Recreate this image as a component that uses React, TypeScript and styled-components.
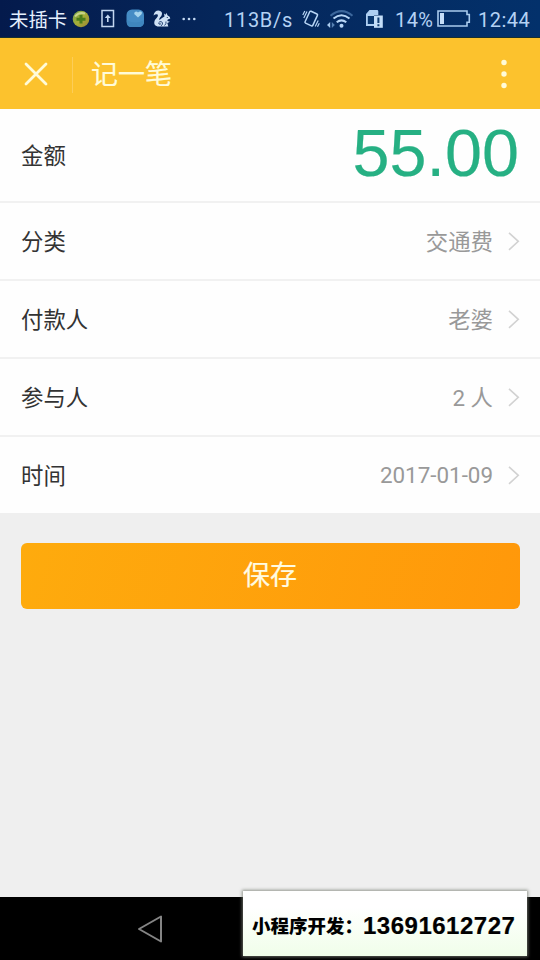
import React from 'react';
import styled, { createGlobalStyle } from 'styled-components';

const Global = createGlobalStyle`
  * { box-sizing: border-box; }
  body { margin: 0; background: #efefef; }
`;

const Screen = styled.div`
  position: relative;
  display: flex;
  flex-direction: column;
  width: 540px;
  height: 960px;
  overflow: hidden;
  background: #efefef;
  font-family: Roboto, 'Noto Sans CJK SC', sans-serif;
`;

const StatusBar = styled.header`
  display: flex;
  align-items: center;
  height: 38px;
  flex: none;
  padding: 0 0 0 9px;
  background: linear-gradient(90deg, #041a4c 0%, #05265a 40%, #03316b 100%);
  border-bottom: 1px solid #18302f;
  color: #b4d2f4;
`;

const Carrier = styled.span`
  flex: none;
  width: 58px;
  padding-top: 5px;
  font-size: 19.4px;
  line-height: 34px;
  color: #e4f0ff;
  white-space: nowrap;
`;

const Reading = styled.span<{ $width: number; $gap?: number; $spacing?: number }>`
  flex: none;
  width: ${(p) => p.$width}px;
  margin-left: ${(p) => p.$gap ?? 0}px;
  letter-spacing: ${(p) => p.$spacing ?? 0}px;
  font-size: 20px;
  line-height: 34px;
  padding-top: 3px;
  white-space: nowrap;
`;

const Glyph = styled.svg<{ $gap?: number }>`
  display: block;
  flex: none;
  margin-left: ${(p) => p.$gap ?? 0}px;
`;

const TitleBar = styled.div`
  display: flex;
  align-items: center;
  flex: none;
  height: 71px;
  padding: 0 20px 0 24px;
  background: #fcc22d;
`;

const TitleDivider = styled.span`
  width: 1px;
  height: 36px;
  margin: 2px 18px 0 24px;
  background: #fdcd58;
`;

const Title = styled.h1`
  flex: 1;
  margin: 0;
  padding-top: 3px;
  font-size: 27px;
  font-weight: 400;
  line-height: 40px;
  color: #fffbd8;
  -webkit-text-stroke: 0.2px;
`;

const Form = styled.div`
  flex: none;
  background: #fefefe;
`;

const Row = styled.div<{ $height?: number }>`
  display: flex;
  align-items: center;
  height: ${(p) => p.$height ?? 78}px;
  padding: 0 20px 0 21px;
  border-bottom: 2px solid #f1f1f1;
  &:last-child { border-bottom-color: #efefef; }
`;

const Label = styled.span`
  flex: 1;
  padding-top: 2px;
  font-size: 22.4px;
  line-height: 34px;
  color: #333;
`;

const Value = styled.span<{ $latin?: boolean }>`
  margin-right: 15px;
  padding-top: ${(p) => (p.$latin ? 0 : 2)}px;
  font-size: 22.4px;
  line-height: 34px;
  color: #999;
`;

const Amount = styled.span`
  margin: -5px 1px 0 0;
  font-family: 'Liberation Sans', Arial, sans-serif;
  font-size: 66.5px;
  line-height: 78px;
  color: #26b083;
  -webkit-text-stroke: 0.2px #26b083;
`;

const SaveButton = styled.button`
  flex: none;
  height: 66px;
  margin: 28px 20px 0 21px;
  padding: 0 1px 5px 0;
  border: 0;
  border-radius: 6px;
  background: linear-gradient(105deg, #feab0d, #ff980a);
  font-family: inherit;
  font-size: 27px;
  color: #fffbe2;
  -webkit-text-stroke: 0.2px;
`;

const NavBar = styled.footer`
  display: flex;
  align-items: center;
  flex: none;
  height: 63px;
  margin-top: auto;
  padding-left: 137px;
  background: #000;
`;

const Contact = styled.aside`
  position: absolute;
  left: 243px;
  top: 891px;
  display: flex;
  align-items: center;
  width: 284px;
  height: 65px;
  padding: 4px 0 0 9px;
  background: linear-gradient(#fff 25%, #f0fee9);
  box-shadow: 0 0 3px 1px rgba(120, 125, 115, 0.8);
  color: #000;
  white-space: nowrap;
`;

const ContactLabel = styled.span`
  width: 111px;
  padding-top: 2px;
  font-size: 18.5px;
  font-weight: 900;
  line-height: 30px;
`;

const Phone = styled.strong`
  font-family: 'Liberation Sans', Arial, sans-serif;
  font-size: 24px;
  line-height: 30px;
  letter-spacing: 0.5px;
  -webkit-text-stroke: 0.2px;
`;

const fields = [
  { label: '分类', value: '交通费' },
  { label: '付款人', value: '老婆' },
  { label: '参与人', value: '2 人' },
  { label: '时间', value: '2017-01-09', latin: true },
];

const Chevron = () => (
  <Glyph width="12" height="20" viewBox="0 0 12 20" fill="none" stroke="#d2d2d2" strokeWidth="1.6">
    <path d="M1 1.800 10.300 10.300 1 18.800" />
  </Glyph>
);

const CoinIcon = () => (
  <Glyph $gap={5} width="18" height="18" viewBox="0 0 18 18">
    <defs>
      <linearGradient id="coin" x1="0" y1="0" x2="1" y2="1">
        <stop offset="0" stopColor="#6fa34e" />
        <stop offset=".5" stopColor="#a5ae38" />
        <stop offset="1" stopColor="#9a8533" />
      </linearGradient>
    </defs>
    <circle cx="9" cy="9" r="8.3" fill="url(#coin)" />
    <path d="M3 6.500Q7 1.500 13 3.500" stroke="#c9d58a" strokeWidth="2" fill="none" />
    <path d="M9 5v8.500M4.500 9.300h9" stroke="#4a7d1b" strokeWidth="3" />
  </Glyph>
);

const UploadIcon = () => (
  <Glyph $gap={11} width="14" height="19" viewBox="0 0 14 19" fill="none" stroke="#c3d6f0">
    <rect x="1" y="1.500" width="11.500" height="16" strokeWidth="1.500" />
    <path d="M6.800 13V8" strokeWidth="1.600" />
    <path d="M3.800 9 6.800 5.500 9.800 9z" fill="#c3d6f0" stroke="none" />
  </Glyph>
);

const BubbleIcon = () => (
  <Glyph $gap={11} width="19" height="19" viewBox="0 0 19 19">
    <rect x=".5" y=".5" width="17.500" height="17.500" rx="5.500" fill="#458cc5" />
    <path d="M1 11q8 5 17 0v3q-1 4-5 4H5q-4 0-4-4z" fill="#3f86bf" />
    <path d="M12 8.500 8.200 5Q8 2.500 10 2.500q1.500 0 2 1 1-1.500 3-1 1.800 1 .3 3z" fill="#a5d4ee" />
  </Glyph>
);

const SquirrelIcon = () => (
  <Glyph $gap={8} width="18" height="18" viewBox="0 0 18 18">
    <path
      d="M.5 5.500Q1.500.5 5.500.500q3.800.5 3.500 3.500-.3 2-2 3.500Q5.700 9 6.500 10q2.500-2.500 5-3.500L11 3.500l1.700 1.300.5-2 1.500 2.700Q17.300 6.500 17.300 8.500l-2.500 1-.5 1.500 2.700.7-2.700 1.300 1 3.500H4.500Q.8 15.500 1.300 12 1.800 9.500 4 7.500 5.500 6 4.700 4.500 3 3.500.5 5.500z"
      fill="#cfe1f5"
    />
    <path
      d="M8 13.500q-.8 1.300-2 .5-.8-1.500.8-2.300 2.200-.6 2.700 1.300.2 2-1.700 3M11.500 15.500q2-1.500 1.500-4"
      fill="none"
      stroke="#15356a"
      strokeWidth=".9"
    />
    <circle cx="14.300" cy="7.500" r=".6" fill="#0a2857" />
  </Glyph>
);

const MoreIcon = () => (
  <Glyph $gap={11} width="14" height="4" viewBox="0 0 14 4" fill="#c3d9f3">
    <circle cx="1.700" cy="2" r="1.300" />
    <circle cx="7" cy="2" r="1.300" />
    <circle cx="12.300" cy="2" r="1.300" />
  </Glyph>
);

const VibrateIcon = () => (
  <Glyph $gap={10} width="18" height="20" viewBox="0 0 18 20" fill="none" stroke="#b8d6f6" strokeWidth="1.500">
    <rect x="4.800" y="3" width="8.500" height="13" rx="1" transform="rotate(25 9 10)" />
    <path d="M1.800 9 5 2.500M.8 6 2.800 2M13.200 17.500l3-6M15.500 17.800l1.800-3.500" strokeWidth="1.200" />
  </Glyph>
);

const WifiIcon = () => (
  <Glyph $gap={7} width="27" height="20" viewBox="0 0 27 20" fill="none" stroke="#b8d6f6" strokeWidth="2">
    <path d="M3.500 6.800Q14.500-2.500 25.500 6.800" stroke="#3c679c" />
    <path d="M6.500 9.500Q14.500 3 22.500 9.500M9.700 13.200Q14.500 9.500 19.300 13.200" />
    <circle cx="14.500" cy="16.800" r="2" fill="#b8d6f6" stroke="none" />
    <path d="M0 16 3.200 13v6z" fill="#a9cbee" stroke="none" />
    <path d="M4.800 13v6L7.800 16z" fill="#5580b2" stroke="none" />
  </Glyph>
);

const SimIcon = () => (
  <Glyph $gap={11} width="19" height="20" viewBox="0 0 19 20">
    <path d="M1 5 4.500 1h7.500q1.300 0 1.300 1.300V6H9v11H1z" fill="#aecff2" />
    <path d="M2.800 7h6.500v8.500H2.800z" fill="#0a386f" />
    <path d="M1 15h9v2H1z" fill="#aecff2" />
    <rect x="9" y="6.500" width="8.800" height="12.300" fill="#c4def8" />
    <path d="M13.400 8.500v5.500M13.400 15.300v2" stroke="#103c70" strokeWidth="2" />
  </Glyph>
);

const BatteryIcon = () => (
  <Glyph $gap={1} width="34" height="17" viewBox="0 0 34 17">
    <path d="M1 1h29v3.500h2.300v7.800H30V16H1z" fill="none" stroke="#a9cbee" strokeWidth="1.600" />
    <rect x="3" y="3" width="4" height="11" fill="#c6def7" />
  </Glyph>
);

export default function App() {
  return (
    <>
      <Global />
      <Screen>
        <StatusBar>
          <Carrier>未插卡</Carrier>
          <CoinIcon />
          <UploadIcon />
          <BubbleIcon />
          <SquirrelIcon />
          <MoreIcon />
          <Reading $width={68} $gap={28} $spacing={0.7}>113B/s</Reading>
          <VibrateIcon />
          <WifiIcon />
          <SimIcon />
          <Reading $width={41} $gap={11} $spacing={0.4}>14%</Reading>
          <BatteryIcon />
          <Reading $width={54} $gap={7} $spacing={0.5}>12:44</Reading>
        </StatusBar>

        <TitleBar>
          <Glyph width="24" height="24" viewBox="0 0 24 24" stroke="#fffbd8" strokeWidth="2.800" strokeLinecap="round">
            <path d="M2 2l20 20M22 2 2 22" />
          </Glyph>
          <TitleDivider />
          <Title>记一笔</Title>
          <Glyph width="32" height="32" viewBox="0 0 32 32" fill="#fffbd8">
            <circle cx="16" cy="4.500" r="2.700" />
            <circle cx="16" cy="16" r="2.700" />
            <circle cx="16" cy="27.500" r="2.700" />
          </Glyph>
        </TitleBar>

        <Form>
          <Row $height={94}>
            <Label>金额</Label>
            <Amount>55.00</Amount>
          </Row>
          {fields.map((f) => (
            <Row key={f.label}>
              <Label>{f.label}</Label>
              <Value $latin={f.latin}>{f.value}</Value>
              <Chevron />
            </Row>
          ))}
        </Form>

        <SaveButton>保存</SaveButton>

        <NavBar>
          <Glyph width="26" height="30" viewBox="0 0 26 30" fill="none" stroke="#858585" strokeWidth="2" strokeLinejoin="round">
            <path d="M24 2.500v25L2 15z" />
          </Glyph>
        </NavBar>

        <Contact>
          <ContactLabel>小程序开发：</ContactLabel>
          <Phone>13691612727</Phone>
        </Contact>
      </Screen>
    </>
  );
}
